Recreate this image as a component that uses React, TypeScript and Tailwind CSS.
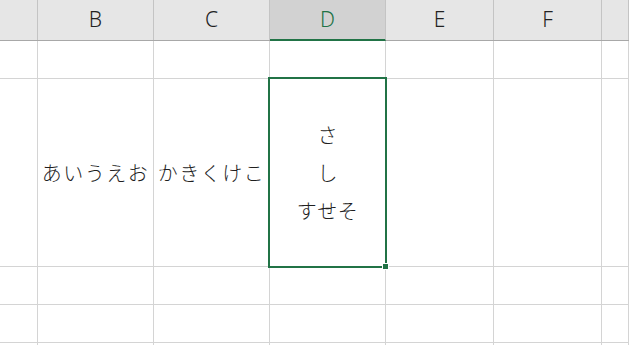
const COLS = [
  { key: "A", label: "", w: "w-[38px]" },
  { key: "B", label: "B", w: "w-[116px]" },
  { key: "C", label: "C", w: "w-[116px]" },
  { key: "D", label: "D", w: "w-[116px]" },
  { key: "E", label: "E", w: "w-[108px]" },
  { key: "F", label: "F", w: "w-[108px]" },
  { key: "G", label: "", w: "flex-1" },
];

const ROWS = ["h-[38px]", "h-[188px]", "h-[38px]", "h-[38px]", "h-[38px]"];

const kana = {
  fontFamily: '"Noto Sans CJK JP", "Noto Sans", sans-serif',
};

function HeaderRow() {
  return (
    <div className="flex h-[41px] bg-[#e6e6e6] border-b border-[#a8a8a8]">
      {COLS.map((c) => {
        const selected = c.key === "D";
        return (
          <div
            key={c.key}
            className={`${c.w} shrink-0 flex items-center justify-center border-r border-[#c4c4c4] text-[21px] font-light ${
              selected
                ? "bg-[#d2d2d2] text-[#217346] border-b-2 border-b-[#217346] -mb-px"
                : "text-[#222]"
            }`}
            style={{ fontFamily: '"Noto Sans", "Liberation Sans", sans-serif' }}
          >
            {c.label}
          </div>
        );
      })}
    </div>
  );
}

function Cell({ col, row }: { col: string; row: number }) {
  if (row === 1 && col === "B") return <span className="tracking-[1.5px]">あいうえお</span>;
  if (row === 1 && col === "C") return <span className="tracking-[1.5px]">かきくけこ</span>;
  if (row === 1 && col === "D")
    return (
      <div className="flex flex-col items-center leading-[38px]">
        <span>さ</span>
        <span>し</span>
        <span className="tracking-[0.5px]">すせそ</span>
      </div>
    );
  return null;
}

export default function App() {
  return (
    <div className="relative w-[629px] h-[345px] overflow-hidden bg-white">
      <HeaderRow />
      {ROWS.map((h, r) => (
        <div key={r} className={`flex ${h} border-b border-[#d4d4d4]`}>
          {COLS.map((c) => (
            <div
              key={c.key}
              className={`${c.w} shrink-0 flex items-center justify-center border-r border-[#d4d4d4] text-[20px] font-light text-[#1f1f1f] whitespace-nowrap`}
              style={kana}
            >
              <Cell col={c.key} row={r} />
            </div>
          ))}
        </div>
      ))}
      <div className="absolute left-[268px] top-[77px] w-[119px] h-[191px] border-2 border-[#217346] pointer-events-none" />
      <div className="absolute left-[383px] top-[264px] w-[5px] h-[5px] bg-[#217346] border border-white box-content -translate-x-px -translate-y-px" />
    </div>
  );
}
